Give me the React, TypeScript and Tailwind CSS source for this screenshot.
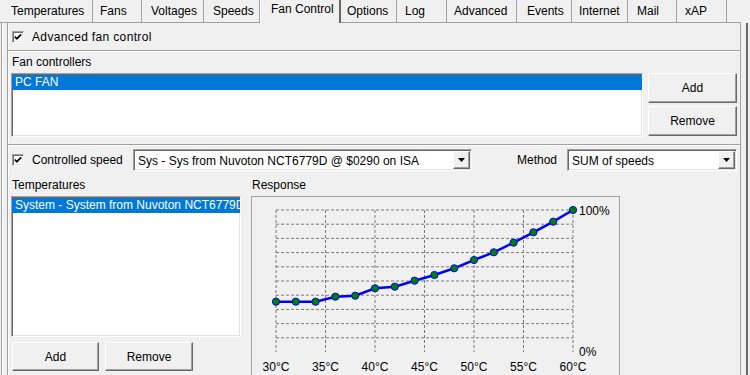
import React from "react";

const TABS = [
  { label: "Temperatures", cls: "w-[91px] pl-[9px]" },
  { label: "Fans", cls: "w-[49px] pl-[7px]" },
  { label: "Voltages", cls: "w-[62px] pl-[9px]" },
  { label: "Speeds", cls: "w-[56px] pl-[9px]" },
  { label: "Fan Control", cls: "w-[81px] pl-[10px]", active: true },
  { label: "Options", cls: "w-[56px] pl-[6px]" },
  { label: "Log", cls: "w-[50px] pl-[8px]" },
  { label: "Advanced", cls: "w-[70px] pl-[7px]" },
  { label: "Events", cls: "w-[55px] pl-[10px]" },
  { label: "Internet", cls: "w-[56px] pl-[7px]" },
  { label: "Mail", cls: "w-[49px] pl-[9px]" },
  { label: "xAP", cls: "w-[50px] pl-[8px]" },
];

// response curve, page y for 30..60 °C in 2° steps
const CURVE = [301.7, 301.7, 301.7, 296.7, 295.7, 288.3, 286.7, 280.7, 275, 268.3, 260, 252.3, 242.7, 232.3, 221.7, 210];

const sunken =
  "border border-t-[#a0a0a0] border-l-[#a0a0a0] border-b-white border-r-white shadow-[inset_1px_1px_0_#696969,inset_-1px_-1px_0_#e3e3e3]";
const raised =
  "border border-t-white border-l-white border-b-[#696969] border-r-[#696969] shadow-[inset_-1px_-1px_0_#a0a0a0]";

function CheckBox() {
  return (
    <span className={`flex h-[12px] w-[12px] shrink-0 items-center justify-center bg-white ${sunken}`}>
      <svg width="8" height="8" viewBox="0 0 8 8">
        <path d="M0.8 3.6 L2.9 5.7 L7.2 1.4" stroke="#000" strokeWidth="1.7" fill="none" />
      </svg>
    </span>
  );
}

function Combo({ text, cls }: { text: string; cls: string }) {
  return (
    <div className={`${cls} flex h-[22px] shrink-0 items-center bg-white ${sunken}`}>
      <span className="flex-1 overflow-hidden whitespace-nowrap pl-[4px] pt-[1px]">{text}</span>
      <span className={`mr-[1px] flex h-[18px] w-[17px] items-center justify-center bg-[#f0f0f0] ${raised}`}>
        <svg width="7" height="4" viewBox="0 0 7 4">
          <path d="M0 0 H7 L3.5 4 Z" fill="#000" />
        </svg>
      </span>
    </div>
  );
}

function Btn({ children, cls }: { children: React.ReactNode; cls: string }) {
  return (
    <div className={`${cls} flex shrink-0 items-center justify-center bg-[#f0f0f0] ${raised}`}>{children}</div>
  );
}

function ListBox({ item, cls }: { item: string; cls: string }) {
  return (
    <div className={`${cls} shrink-0 overflow-hidden bg-white pt-[1px] ${sunken}`}>
      <div className="h-[15px] overflow-hidden whitespace-nowrap bg-[#0078d7] pl-[3px] leading-[15px] text-white">
        {item}
      </div>
    </div>
  );
}

function Chart() {
  const x0 = 276;
  const x1 = 573;
  const yTop = 210;
  const yBot = 352;
  const step = (x1 - x0) / 15;
  const pts = CURVE.map((y, i) => [x0 + i * step, y]);
  return (
    <svg width="367" height="183" className="block">
      <g transform="translate(-252 -197)" fontFamily="'Liberation Sans', Arial, sans-serif" fontSize="12">
        {[0, 1, 2, 3, 4, 5, 6].map((i) => (
          <line
            key={`v${i}`}
            x1={x0 + i * 49.5}
            x2={x0 + i * 49.5}
            y1={yTop}
            y2={yBot}
            stroke="#7a7a7a"
            strokeDasharray="3 2"
          />
        ))}
        {[0, 1, 2, 3, 4, 5, 6, 7, 8, 9].map((j) => (
          <line
            key={`h${j}`}
            x1={x0}
            x2={x1}
            y1={yTop + j * 14.2}
            y2={yTop + j * 14.2}
            stroke="#7a7a7a"
            strokeDasharray="3 2"
          />
        ))}
        <polyline points={pts.map((p) => p.join(",")).join(" ")} stroke="#0000ff" strokeWidth="2.5" fill="none" />
        {pts.map((p, i) => (
          <circle key={i} cx={p[0]} cy={p[1]} r="3.6" fill="#008000" stroke="#0000ff" strokeWidth="1" />
        ))}
        <text x="579" y="215">100%</text>
        <text x="579" y="356">0%</text>
        {[30, 35, 40, 45, 50, 55, 60].map((t, i) => (
          <text key={t} x={x0 + i * 49.5} y="371" textAnchor="middle">
            {t}°C
          </text>
        ))}
      </g>
    </svg>
  );
}

export default function App() {
  return (
    <div className="relative h-[375px] w-[750px] overflow-hidden bg-[#f0f0f0] font-['Liberation_Sans',Arial,sans-serif] text-[12px] leading-[16px] text-black">
      {/* Tab strip */}
      <div className="flex h-[23px] w-[741px]">
        <div className="w-[2px] border-b border-[#a0a0a0]" />
        {TABS.map((t) =>
          t.active ? (
            <div
              key={t.label}
              className={`${t.cls} h-[23px] border-l border-r-2 border-l-white border-r-[#696969] pt-[1px] whitespace-nowrap`}
            >
              {t.label}
            </div>
          ) : (
            <div
              key={t.label}
              className={`${t.cls} h-[23px] border-b border-r border-[#a0a0a0] pt-[3px] whitespace-nowrap`}
            >
              {t.label}
            </div>
          )
        )}
        <div className="flex-1 border-b border-[#a0a0a0]" />
      </div>

      <div className="flex h-[352px]">
        {/* Tab page */}
        <div className="ml-[1px] w-[740px] border-l border-r border-[#a0a0a0] shadow-[inset_1px_0_0_#fff]">
          <div className="ml-[5px] h-full border-l border-[#a0a0a0] pl-[3px] shadow-[inset_1px_0_0_#fff]">
            {/* Advanced fan control */}
            <div className="flex h-[27px] items-center pl-[1px]">
              <CheckBox />
              <span className="ml-[8px] tracking-[0.35px]">Advanced fan control</span>
            </div>

            {/* Fan controllers */}
            <div className="-ml-[3px] h-[94px] border-t border-[#a0a0a0] pl-[3px] pt-[3px] shadow-[inset_0_1px_0_#fff]">
              <div className="pl-[1px]">Fan controllers</div>
              <div className="mt-[3px] flex">
                <ListBox item="PC FAN" cls="h-[64px] w-[632px]" />
                <div className="ml-[5px] flex flex-col gap-[3px]">
                  <Btn cls="h-[30px] w-[89px]">Add</Btn>
                  <Btn cls="h-[30px] w-[89px]">Remove</Btn>
                </div>
              </div>
            </div>

            {/* Controlled speed */}
            <div className="-ml-[3px] border-t border-[#a0a0a0] pl-[3px] shadow-[inset_0_1px_0_#fff]">
              <div className="mt-[4px] flex h-[22px] items-center">
                <span className="ml-[1px]">
                  <CheckBox />
                </span>
                <span className="ml-[8px] w-[101px] shrink-0">Controlled speed</span>
                <Combo cls="w-[339px]" text="Sys - Sys from Nuvoton NCT6779D @ $0290 on ISA" />
                <span className="ml-[45px] w-[50px] shrink-0">Method</span>
                <Combo cls="w-[170px]" text="SUM of speeds" />
              </div>

              <div className="mt-[6px] flex">
                <div className="w-[230px] shrink-0">
                  <div className="pl-[1px]">Temperatures</div>
                  <ListBox item="System - System from Nuvoton NCT6779D" cls="mt-[3px] h-[141px] w-[230px]" />
                  <div className="mt-[5px] flex">
                    <Btn cls="ml-[1px] h-[29px] w-[87px]">Add</Btn>
                    <Btn cls="ml-[6px] h-[29px] w-[88px]">Remove</Btn>
                  </div>
                </div>
                <div className="ml-[10px] w-[369px] shrink-0">
                  <div className="pl-[1px]">Response</div>
                  <div className="mt-[3px] h-[185px] w-[369px] border border-[#a0a0a0]">
                    <Chart />
                  </div>
                </div>
              </div>
            </div>
          </div>
        </div>
        <div className="ml-[5px] w-[2px] bg-[#696969]" />
      </div>
    </div>
  );
}
